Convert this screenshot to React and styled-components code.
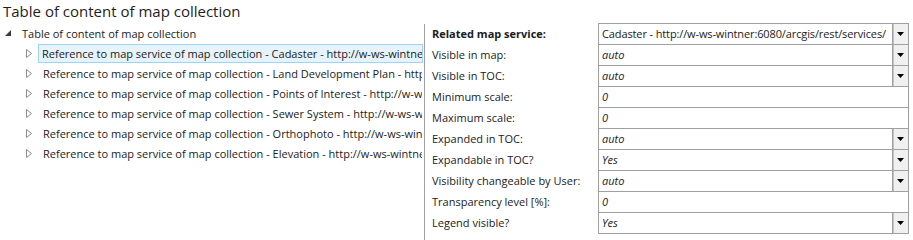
import React from "react";
import styled, { createGlobalStyle } from "styled-components";

const GlobalStyle = createGlobalStyle`
  body {
    margin: 0;
    background: #ffffff;
    font-family: "Open Sans", "Liberation Sans", sans-serif;
    color: #1b1b1b;
  }
`;

const services = [
  "Cadaster - http://w-ws-wintner:6080/arcgis/rest/services/",
  "Land Development Plan - http://w-ws-wintner:6080/arcgis/rest/services/",
  "Points of Interest - http://w-ws-wintner:6080/arcgis/rest/services/",
  "Sewer System - http://w-ws-wintner:6080/arcgis/rest/services/",
  "Orthophoto - http://w-ws-wintner:6080/arcgis/rest/services/",
  "Elevation - http://w-ws-wintner:6080/arcgis/rest/services/",
];

const properties = [
  { label: "Related map service:", value: "Cadaster - http://w-ws-wintner:6080/arcgis/rest/services/", bold: true, plain: true, drop: true },
  { label: "Visible in map:", value: "auto", drop: true },
  { label: "Visible in TOC:", value: "auto", drop: true },
  { label: "Minimum scale:", value: "0" },
  { label: "Maximum scale:", value: "0" },
  { label: "Expanded in TOC:", value: "auto", drop: true },
  { label: "Expandable in TOC?", value: "Yes", drop: true },
  { label: "Visibility changeable by User:", value: "auto", drop: true },
  { label: "Transparency level [%]:", value: "0" },
  { label: "Legend visible?", value: "Yes", drop: true },
];

const App = () => {
  return (
    <Page>
      <GlobalStyle />
      <Title>Table of content of map collection</Title>
      <Main>
        <TreePanel>
          <TreeRow>
            <Expander>
              <svg width="6" height="6" viewBox="0 0 6 6">
                <polygon points="6,0 6,6 0,6" fill="#3c3c3c" />
              </svg>
            </Expander>
            <TreeLabel>Table of content of map collection</TreeLabel>
          </TreeRow>
          {services.map((s, i) => (
            <TreeRow key={s} $indent>
              <Expander>
                <svg width="6" height="9" viewBox="0 0 6 9">
                  <polygon points="0.5,0.5 5.5,4.5 0.5,8.5" fill="none" stroke="#8a8a8a" strokeWidth="1" />
                </svg>
              </Expander>
              <TreeLabel $selected={i === 0}>
                Reference to map service of map collection - {s}
              </TreeLabel>
            </TreeRow>
          ))}
        </TreePanel>
        <PropertyPanel>
          {properties.map((p) => (
            <PropRow key={p.label}>
              <PropLabel $bold={p.bold}>{p.label}</PropLabel>
              <PropValue>
                <ValueText $plain={p.plain}>{p.value}</ValueText>
                {p.drop && (
                  <DropButton>
                    <svg width="7" height="4" viewBox="0 0 7 4">
                      <polygon points="0,0 7,0 3.5,4" fill="#000" />
                    </svg>
                  </DropButton>
                )}
              </PropValue>
            </PropRow>
          ))}
        </PropertyPanel>
      </Main>
    </Page>
  );
};

const Page = styled.div`
  width: 913px;
  height: 240px;
  overflow: hidden;
  display: flex;
  flex-direction: column;
`;

const Title = styled.div`
  height: 23px;
  padding-left: 3px;
  font-size: 15px;
  line-height: 23px;
  color: #1e1e1e;
`;

const Main = styled.div`
  display: flex;
  flex: 1;
`;

const TreePanel = styled.div`
  width: 423px;
  padding-right: 1px;
  overflow: hidden;
  display: flex;
  flex-direction: column;
`;

const TreeRow = styled.div`
  display: flex;
  align-items: center;
  height: 20px;
  min-width: 0;
  padding-left: ${(p) => (p.$indent ? "26px" : "5px")};
  white-space: nowrap;
`;

const Expander = styled.span`
  display: flex;
  align-items: center;
  width: 12px;
  flex-shrink: 0;
`;

const TreeLabel = styled.span`
  font-size: 11px;
  line-height: 17px;
  padding: 0 3px;
  min-width: 0;
  overflow: hidden;
  text-overflow: clip;
  margin-left: ${(p) => (p.$selected ? "0" : "1px")};
  border: 1px solid ${(p) => (p.$selected ? "#9ed3f2" : "transparent")};
  background: ${(p) => (p.$selected ? "#e6f3fb" : "transparent")};
  flex: ${(p) => (p.$selected ? "1 1 0" : "0 1 auto")};
`;

const PropertyPanel = styled.div`
  width: 484px;
  margin-top: 1px;
  border-left: 1px solid #a0a0a0;
  display: flex;
  flex-direction: column;
`;

const PropRow = styled.div`
  display: flex;
  height: 21px;
  &:first-child {
    height: 22px;
    margin-top: -1px;
  }
  &:first-child > div:last-child {
    border-top: 1px solid #a0a0a0;
  }
`;

const PropLabel = styled.div`
  width: 166px;
  height: 20px;
  padding-left: 7px;
  font-size: 11px;
  line-height: 20px;
  font-weight: ${(p) => (p.$bold ? 700 : 400)};
  white-space: nowrap;
  align-self: flex-end;
  margin-bottom: 1px;
`;

const PropValue = styled.div`
  width: 309px;
  display: flex;
  border: 1px solid #a0a0a0;
  border-top: none;
`;

const ValueText = styled.div`
  flex: 1;
  min-width: 0;
  padding-left: 3px;
  font-size: 11px;
  line-height: 20px;
  letter-spacing: ${(p) => (p.$plain ? "-0.12px" : "0")};
  font-style: ${(p) => (p.$plain ? "normal" : "italic")};
  white-space: nowrap;
  overflow: hidden;
`;

const DropButton = styled.div`
  width: 15px;
  flex-shrink: 0;
  display: flex;
  align-items: center;
  justify-content: center;
  background: #f0f0f0;
  border-left: 1px solid #a0a0a0;
  box-shadow: inset 1px 0 0 #c4c4c4;
`;

export default App;
